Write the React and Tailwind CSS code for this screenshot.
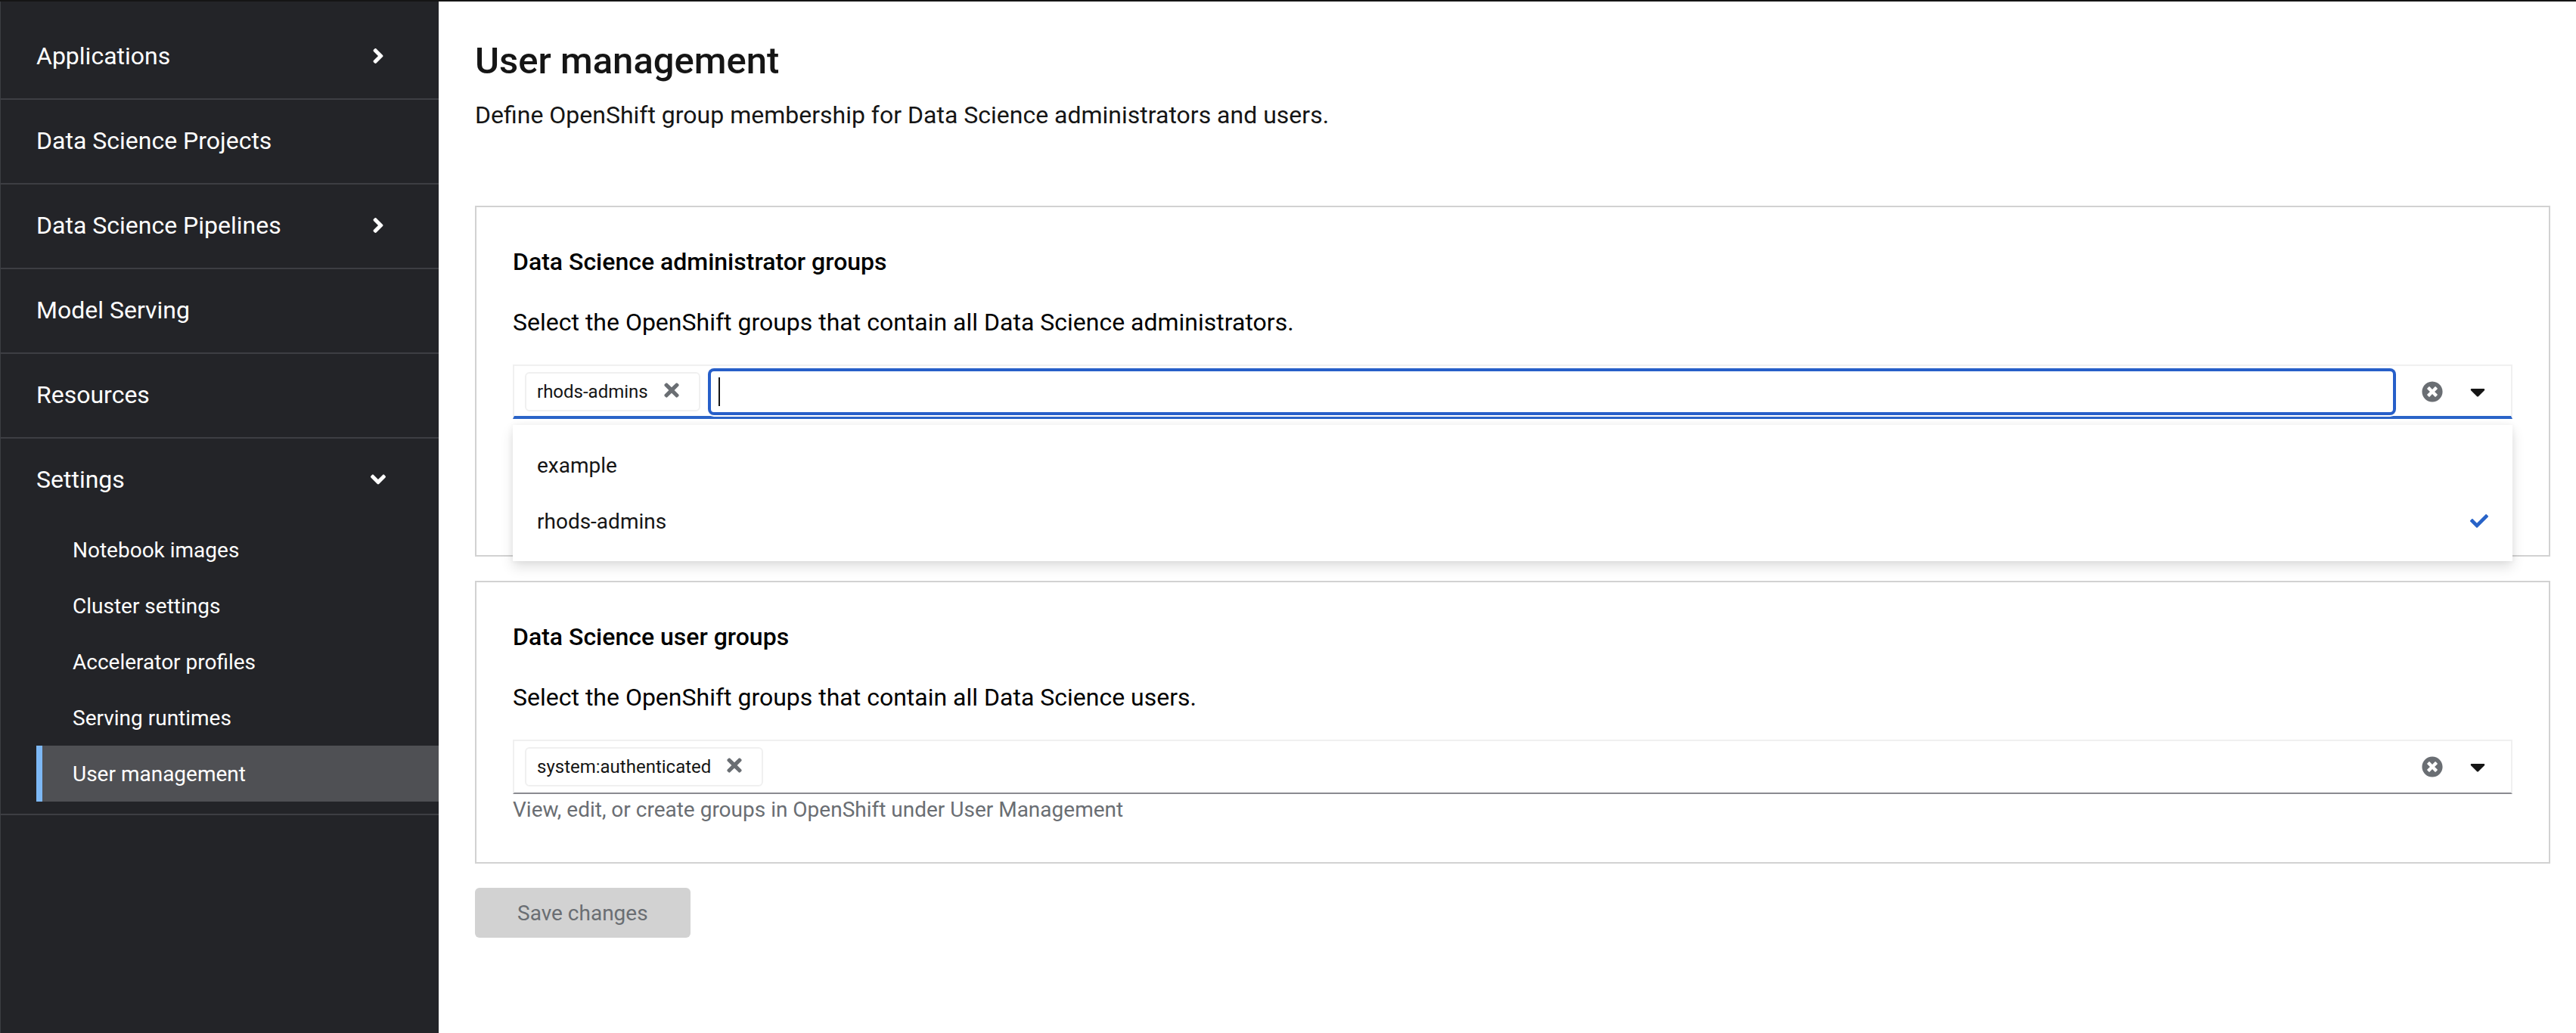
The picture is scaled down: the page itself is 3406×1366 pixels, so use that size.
import {
  FaAngleDown,
  FaAngleRight,
  FaCaretDown,
  FaCheck,
  FaTimes,
  FaTimesCircle,
} from "react-icons/fa";

const navBefore = [
  { label: "Applications", expandable: true },
  { label: "Data Science Projects" },
  { label: "Data Science Pipelines", expandable: true },
  { label: "Model Serving" },
  { label: "Resources" },
];

const settingsItems = [
  "Notebook images",
  "Cluster settings",
  "Accelerator profiles",
  "Serving runtimes",
  "User management",
];

const rowClass =
  "flex h-[110px] w-full items-center justify-between pr-16 pb-0.5 pl-12 text-left text-[32px] leading-[48px]";

function Sidebar() {
  return (
    <nav
      aria-label="Global"
      className="w-[580px] shrink-0 border-l border-[#3c3e42] bg-[#232428] pt-[18px] text-white"
    >
      <ul className="-ml-px">
        {navBefore.map((item) => (
          <li key={item.label} className="border-b-2 border-[#3d3e43]">
            {item.expandable ? (
              <button type="button" aria-expanded="false" className={rowClass}>
                {item.label}
                <FaAngleRight className="size-8" />
              </button>
            ) : (
              <a href="#" className={rowClass}>
                {item.label}
              </a>
            )}
          </li>
        ))}
        <li className="border-b-2 border-[#3d3e43] pb-4">
          <button type="button" aria-expanded="true" className={rowClass}>
            Settings
            <FaAngleDown className="size-8" />
          </button>
          <ul className="pl-12">
            {settingsItems.map((label) => {
              const current = label === "User management";
              return (
                <li key={label}>
                  <a
                    href="#"
                    aria-current={current ? "page" : undefined}
                    className={
                      "flex h-[74px] items-center border-l-8 pt-0.5 pl-10 text-[28px] leading-[42px] " +
                      (current
                        ? "border-[#7db8f5] bg-[#4f5054]"
                        : "border-transparent")
                    }
                  >
                    {label}
                  </a>
                </li>
              );
            })}
          </ul>
        </li>
      </ul>
    </nav>
  );
}

function Chip({ children }) {
  return (
    <span className="flex h-[52px] shrink-0 items-center rounded-md border-2 border-[#f0f0f0] bg-white pr-[22px] pl-3.5 text-2xl leading-9">
      {children}
      <button
        type="button"
        aria-label={"Remove " + children}
        className="mb-1 ml-[17px] text-[#6a6e73]"
      >
        <FaTimes className="size-7" />
      </button>
    </span>
  );
}

function GroupCard({ id, title, description, chip, open, helper, options }) {
  return (
    <section
      className={
        "border-2 border-[#d2d2d2] px-12 pt-12 text-black " +
        (open ? "pb-[180px]" : "pb-12")
      }
    >
      <h2 className="text-[32px] leading-[48px] font-medium">{title}</h2>
      <label htmlFor={id} className="mt-8 block text-[32px] leading-[48px]">
        {description}
      </label>
      <div className="relative mt-8 text-[#151515]">
        <div
          className={
            "flex h-[72px] items-center border-2 border-[#f0f0f0] pr-7 pl-3.5 " +
            (open
              ? "border-b-4 border-b-[#2b64c8] pt-0.5"
              : "border-b-[#8a8b90]")
          }
        >
          <Chip>{chip}</Chip>
          <div className="relative mr-[38px] ml-3.5 flex-1">
            <input
              id={id}
              type="text"
              className={
                "block h-[54px] w-full bg-white px-2 text-[28px] caret-transparent outline-none " +
                (open
                  ? "rounded-sm shadow-[0_0_0_4px_#275fc9,0_0_0_6px_#ffffff]"
                  : "")
              }
            />
            {open && (
              <span className="absolute top-2 left-2.5 h-[38px] w-0.5 bg-[#151515]" />
            )}
          </div>
          <button type="button" aria-label="Clear all" className="text-[#6a6e73]">
            <FaTimesCircle className="size-7" />
          </button>
          <button type="button" aria-label="Toggle options" className="ml-[30px]">
            <FaCaretDown className="size-8" />
          </button>
        </div>
        {open && (
          <ul
            role="listbox"
            aria-label={title}
            className="absolute top-full right-0 left-0 z-10 mt-2 bg-white py-4 shadow-[0_8px_16px_0_rgba(3,3,3,0.12),0_0_8px_0_rgba(3,3,3,0.06)]"
          >
            {options.map((option) => (
              <li key={option} role="option" aria-selected={option === chip}>
                <button
                  type="button"
                  className="flex h-[74px] w-full items-center justify-between px-8 text-[28px] leading-[42px]"
                >
                  <span className="pt-0.5">{option}</span>
                  {option === chip && <FaCheck className="size-6 text-[#2863c8]" />}
                </button>
              </li>
            ))}
          </ul>
        )}
      </div>
      {helper && (
        <p className="text-[28px] leading-[42px] text-[#6a6e73]">{helper}</p>
      )}
    </section>
  );
}

export default function App() {
  return (
    <div className="flex min-h-screen flex-col border-t-2 border-[#151515] bg-white font-['Roboto',sans-serif] text-[#151515]">
      <div className="flex flex-1">
        <Sidebar />
        <main className="min-w-0 flex-1 pt-12 pr-[34px] pb-12 pl-12">
          <h1 className="text-[49px] leading-[62px] font-medium">User management</h1>
          <p className="mt-4 text-[32px] leading-[48px]">
            Define OpenShift group membership for Data Science administrators and
            users.
          </p>
          <form className="mt-24 flex flex-col gap-8">
            <GroupCard
              id="admin-groups"
              title="Data Science administrator groups"
              description="Select the OpenShift groups that contain all Data Science administrators."
              chip="rhods-admins"
              open
              options={["example", "rhods-admins"]}
            />
            <GroupCard
              id="user-groups"
              title="Data Science user groups"
              description="Select the OpenShift groups that contain all Data Science users."
              chip="system:authenticated"
              helper="View, edit, or create groups in OpenShift under User Management"
            />
            <button
              type="submit"
              disabled
              className="h-[66px] self-start rounded-md bg-[#d2d2d2] px-14 pt-0.5 text-[28px] leading-[42px] text-[#6a6e73]"
            >
              Save changes
            </button>
          </form>
        </main>
      </div>
    </div>
  );
}
